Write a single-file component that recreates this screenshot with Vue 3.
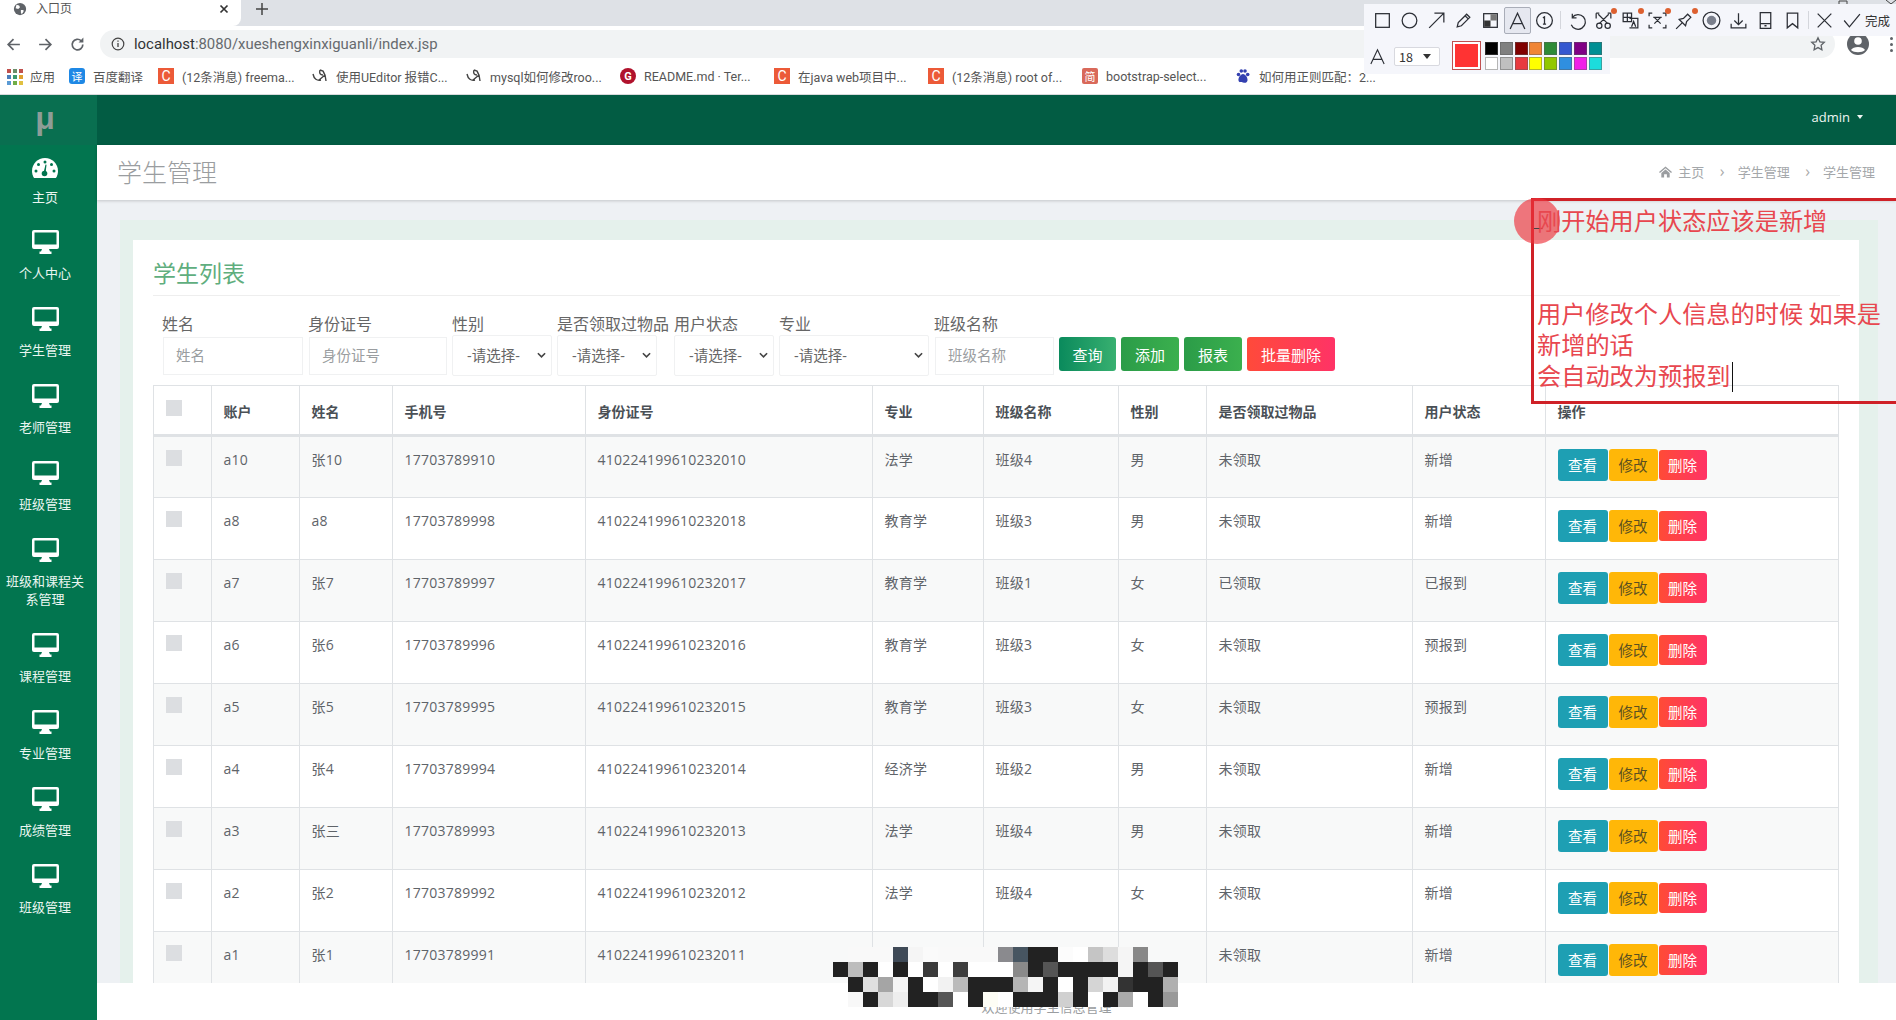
<script setup>
const bookmarks = [
  { kind: 'apps', text: '应用', w: 63 },
  { kind: 'yi', text: '百度翻译', w: 89 },
  { kind: 'c', text: '(12条消息) freema...', w: 154 },
  { kind: 'bird', text: '使用UEditor 报错C...', w: 154 },
  { kind: 'bird', text: 'mysql如何修改roo...', w: 154 },
  { kind: 'g', text: 'README.md · Ter...', w: 154 },
  { kind: 'c', text: '在java web项目中...', w: 154 },
  { kind: 'c', text: '(12条消息) root of...', w: 154 },
  { kind: 'jian', text: 'bootstrap-select...', w: 153 },
  { kind: 'paw', text: '如何用正则匹配：2...', w: 140 }
]
const appColors = ['#c0504d', '#6b8e6b', '#c0504d', '#4a7ebb', '#3d9970', '#e0a030', '#5b9bd5', '#70ad47', '#e0c040']
const menu = ['个人中心', '学生管理', '老师管理', '班级管理', '班级和课程关系管理', '课程管理', '专业管理', '成绩管理', '班级管理']
const colWidths = [58, 88, 93, 193, 287, 111, 135, 88, 206, 133, 293]
const headers = ['账户', '姓名', '手机号', '身份证号', '专业', '班级名称', '性别', '是否领取过物品', '用户状态', '操作']
const rows = [
  ['a10', '张10', '17703789910', '410224199610232010', '法学', '班级4', '男', '未领取', '新增'],
  ['a8', 'a8', '17703789998', '410224199610232018', '教育学', '班级3', '男', '未领取', '新增'],
  ['a7', '张7', '17703789997', '410224199610232017', '教育学', '班级1', '女', '已领取', '已报到'],
  ['a6', '张6', '17703789996', '410224199610232016', '教育学', '班级3', '女', '未领取', '预报到'],
  ['a5', '张5', '17703789995', '410224199610232015', '教育学', '班级3', '女', '未领取', '预报到'],
  ['a4', '张4', '17703789994', '410224199610232014', '经济学', '班级2', '男', '未领取', '新增'],
  ['a3', '张三', '17703789993', '410224199610232013', '法学', '班级4', '男', '未领取', '新增'],
  ['a2', '张2', '17703789992', '410224199610232012', '法学', '班级4', '女', '未领取', '新增'],
  ['a1', '张1', '17703789991', '410224199610232011', '法学', '班级4', '男', '未领取', '新增']
]
const swatches = ['#000000', '#808080', '#800000', '#f08535', '#2e8b37', '#3558d0', '#800085', '#008f94', '#ffffff', '#c0c0c0', '#e83a3f', '#ffff00', '#92c800', '#2f8fe0', '#f020e8', '#1cdcdc']
const _ = null
const w = '#f9f9f9'
const mosaic = [
  _, w, w, w, '#3f4a57', '#f5f5f5', '#fafafa', w, w, w, w, '#8a8a8e', '#475561', '#222', '#222', '#fcfcfc', '#fff', '#c5c5c5', '#ddd', '#f5f5f5', '#888', _, _,
  '#222', '#bdbdbd', '#222', '#fff', '#222', '#fff', '#3a3a3a', '#fff', '#3e3e3e', '#fff', '#fff', '#fff', '#8a8a8a', '#222', '#555', '#222', '#222', '#222', '#222', '#f5f5f5', '#222', '#555', '#222',
  _, '#222', '#e0e0e0', '#a5a5a5', '#f5f5f5', '#222', '#fff', '#f2f2f2', '#bbb', '#222', '#222', '#222', '#b5b5b5', '#f5f5f5', '#222', '#fff', '#222', '#d5d5d5', '#f2f2f2', '#333', '#222', '#222', '#b0b0b0',
  _, '#f8f8f8', '#222', '#d8d8d8', '#eee', '#222', '#222', '#555', '#fff', '#222', '#fdfdf5', '#fff', '#222', '#222', '#222', '#d0d0d0', '#222', '#fff', '#222', '#aaa', '#fff', '#222', '#999'
]
</script>

<template>
  <div class="root">
    <header class="chrome">
      <div class="tabs">
        <div class="tab">
          <svg class="globe" viewBox="0 0 16 16"><circle cx="8" cy="8" r="7" fill="#5f6368"/><path d="M4 3l3 1 1 2-2 2-3-1zM9 9l3 0 0 2-2 3-1-2z" fill="#fff"/></svg>
          <span class="tab-title">入口页</span>
          <svg class="tab-x" viewBox="0 0 10 10"><path d="M1.500 1.500l7 7M8.500 1.500l-7 7" stroke="#333" stroke-width="1.700"/></svg>
        </div>
        <svg class="tab-plus" viewBox="0 0 12 12"><path d="M6 0v12M0 6h12" stroke="#444" stroke-width="1.500"/></svg>
      </div>
      <div class="toolbar">
        <svg class="nav-ic" viewBox="0 0 16 16"><path d="M14 8H3M8 3L3 8l5 5" fill="none" stroke="#5f6368" stroke-width="1.6"/></svg>
        <svg class="nav-ic" viewBox="0 0 16 16"><path d="M2 8h11M8 3l5 5-5 5" fill="none" stroke="#5f6368" stroke-width="1.6"/></svg>
        <svg class="nav-ic" viewBox="0 0 16 16"><path d="M13 8a5 5 0 1 1-1.5-3.5" fill="none" stroke="#5f6368" stroke-width="1.6"/><path d="M13.5 1.5v4.5H9z" fill="#5f6368"/></svg>
        <div class="url">
          <svg class="info" viewBox="0 0 14 14"><circle cx="7" cy="7" r="5.8" fill="none" stroke="#444" stroke-width="1.2"/><path d="M7 6v4M7 3.6v1.2" stroke="#444" stroke-width="1.3"/></svg>
          <span class="host">localhost</span><span class="path">:8080/xueshengxinxiguanli/index.jsp</span>
          <svg class="star" viewBox="0 0 16 16"><path d="M8 1.8l1.9 4 4.4.5-3.2 3 .8 4.4L8 11.6l-3.9 2.1.8-4.4-3.2-3 4.4-.5z" fill="none" stroke="#5f6368" stroke-width="1.3"/></svg>
        </div>
        <svg class="avatar" viewBox="0 0 22 22"><circle cx="11" cy="11" r="11" fill="#5f6368"/><circle cx="11" cy="8" r="3.8" fill="#fff"/><path d="M4 17c2-4 12-4 14 0-3 3-11 3-14 0z" fill="#fff"/></svg>
        <span class="dots"><i></i><i></i><i></i></span>
      </div>
      <div class="bookmarks">
        <div v-for="b in bookmarks" :key="b.text" class="bm" :style="{ width: b.w + 'px' }">
          <span v-if="b.kind === 'apps'" class="bm-apps"><i v-for="(c, i) in appColors" :key="i" :style="{ background: c }"></i></span>
          <span v-else-if="b.kind === 'yi'" class="bm-ic yi">译</span>
          <span v-else-if="b.kind === 'c'" class="bm-ic cc">C</span>
          <span v-else-if="b.kind === 'g'" class="bm-ic gg">G</span>
          <span v-else-if="b.kind === 'jian'" class="bm-ic jian">简</span>
          <svg v-else-if="b.kind === 'bird'" class="bm-svg" viewBox="0 0 16 16"><path d="M1 6c1 5 4 7 8 6M8 2l3 1c2 3 3 7 3 10M8 2c-1 3 0 5 3 5M7 12l6-5" fill="none" stroke="#444" stroke-width="1.4"/></svg>
          <svg v-else class="bm-svg" viewBox="0 0 16 16"><g fill="#3340b0"><circle cx="3.5" cy="6.5" r="1.8"/><circle cx="6.3" cy="3" r="1.8"/><circle cx="10" cy="3" r="1.8"/><circle cx="12.7" cy="6.5" r="1.8"/><path d="M8 6c2.5 0 5 4 4.5 6.5S10 15 8 14.5 4 15 3.5 12.500 5.500 6 8 6z"/></g></svg>
          <span class="bm-text">{{ b.text }}</span>
        </div>
      </div>
    </header>

    <div class="shell">
      <aside class="side">
        <div class="logo">μ</div>
        <div class="side-item home">
          <svg class="gauge" viewBox="0 0 26 20"><path d="M13 0C5.800 0 0 5.800 0 13c0 2.500.7 4.800 1.900 6.800.2.200.4.200.6.200h21c.2 0 .4 0 .6-.2C25.300 17.800 26 15.500 26 13 26 5.800 20.200 0 13 0z" fill="#fff"/><g fill="#02754f"><circle cx="13" cy="4" r="1.500"/><circle cx="6.500" cy="6.500" r="1.500"/><circle cx="19.500" cy="6.500" r="1.500"/><circle cx="4" cy="13" r="1.500"/><circle cx="22" cy="13" r="1.500"/><circle cx="12.500" cy="15.500" r="2.800"/><path d="M11.500 15l2-8.500 1 .3-1 9z"/></g></svg>
          <span>主页</span>
        </div>
        <div v-for="(m, i) in menu" :key="i" class="side-item">
          <svg class="desk" viewBox="0 0 27 24"><path d="M2 0h23a2 2 0 0 1 2 2v15a2 2 0 0 1-2 2h-8l1 2.500h1.500V24H7.500v-2.500H9l1-2.500H2a2 2 0 0 1-2-2V2a2 2 0 0 1 2-2zm.5 2.500v12h22v-12z" fill="#fff" fill-rule="evenodd"/></svg>
          <span>{{ m }}</span>
        </div>
      </aside>

      <main class="main">
        <div class="topbar"><span class="admin">admin</span><i class="caret"></i></div>
        <div class="heading">
          <h1>学生管理</h1>
          <div class="crumbs">
            <svg class="home-ic" viewBox="0 0 14 12"><path d="M7 0l7 6-1 1-6-5-6 5-1-1zM2.500 7L7 3.200 11.500 7v5H8.500V8.500h-3V12H2.500z" fill="#9a9da0"/></svg>
            <span>主页</span><b>›</b><span>学生管理</span><b>›</b><span>学生管理</span>
          </div>
        </div>
        <div class="content">
          <div class="tint">
            <section class="card">
              <h2>学生列表</h2>
              <div class="filters">
                <div class="fg w141"><label>姓名</label><div class="ctl"><input class="inp" placeholder="姓名" /></div></div>
                <div class="fg w139"><label>身份证号</label><div class="ctl"><input class="inp" placeholder="身份证号" /></div></div>
                <div class="fg w100"><label>性别</label><div class="ctl"><div class="sel">-请选择-<svg viewBox="0 0 10 6"><path d="M1 1l4 4 4-4" fill="none" stroke="#444" stroke-width="1.800"/></svg></div></div></div>
                <div class="fg w112"><label>是否领取过物品</label><div class="ctl"><div class="sel w100">-请选择-<svg viewBox="0 0 10 6"><path d="M1 1l4 4 4-4" fill="none" stroke="#444" stroke-width="1.800"/></svg></div></div></div>
                <div class="fg w100"><label>用户状态</label><div class="ctl"><div class="sel">-请选择-<svg viewBox="0 0 10 6"><path d="M1 1l4 4 4-4" fill="none" stroke="#444" stroke-width="1.800"/></svg></div></div></div>
                <div class="fg w150"><label>专业</label><div class="ctl"><div class="sel">-请选择-<svg viewBox="0 0 10 6"><path d="M1 1l4 4 4-4" fill="none" stroke="#444" stroke-width="1.800"/></svg></div></div></div>
                <div class="fg w120"><label>班级名称</label><div class="ctl"><input class="inp" placeholder="班级名称" /></div></div>
                <div class="actions">
                  <button class="fb q">查询</button>
                  <button class="fb g">添加</button>
                  <button class="fb g">报表</button>
                  <button class="fb d">批量删除</button>
                </div>
              </div>
              <table>
                <colgroup><col v-for="(cw, i) in colWidths" :key="i" :style="{ width: cw + 'px' }" /></colgroup>
                <thead>
                  <tr>
                    <th class="chk"><span class="box"></span></th>
                    <th v-for="h in headers" :key="h">{{ h }}</th>
                  </tr>
                </thead>
                <tbody>
                  <tr v-for="r in rows" :key="r[0]">
                    <td class="chk"><span class="box"></span></td>
                    <td v-for="(c, i) in r" :key="i">{{ c }}</td>
                    <td class="ops">
                      <button class="rb see">查看</button><button class="rb edit">修改</button><button class="rb del">删除</button>
                    </td>
                  </tr>
                </tbody>
              </table>
            </section>
          </div>
        </div>
        <footer class="foot">欢迎使用学生信息管理</footer>
      </main>
    </div>

    <div class="mosaic"><i v-for="(c, i) in mosaic" :key="i" :style="{ background: c || 'transparent' }"></i></div>

    <div class="note-box"></div>
    <div class="note-dot"></div>
    <div class="note-text">刚开始用户状态应该是新增<br /><br /><br />用户修改个人信息的时候 如果是<br />新增的话<br />会自动改为预报到<i class="text-caret"></i></div>

    <svg class="wc" viewBox="0 0 60 4"><path d="M3 4V1h8v3M50 0l5 4 5-4" fill="none" stroke="#444" stroke-width="1"/></svg>

    <div class="shot">
      <div class="shot-top">
        <span class="ti"><svg viewBox="0 0 20 20"><rect x="3.500" y="3.500" width="13" height="13"/></svg></span>
        <span class="ti"><svg viewBox="0 0 20 20"><circle cx="10" cy="10" r="7"/></svg></span>
        <span class="ti"><svg viewBox="0 0 20 20"><path d="M3 17L17 3M8 3h9v9"/></svg></span>
        <span class="ti"><svg viewBox="0 0 20 20"><path d="M4 16l1-4 8-8 3 3-8 8zM11.500 5.500l3 3"/></svg></span>
        <span class="ti"><svg viewBox="0 0 20 20"><rect x="3.500" y="3.500" width="13" height="13"/><rect x="10" y="4" width="6" height="6" fill="#777" stroke="none"/><rect x="4" y="10" width="6" height="6" fill="#333" stroke="none"/></svg></span>
        <span class="ti on"><svg viewBox="0 0 20 20"><path d="M3 18L10 3l7 15M5.500 13h9"/></svg></span>
        <span class="ti"><svg viewBox="0 0 20 20"><circle cx="10" cy="10" r="7.500"/><path d="M8.500 7.500L10 6.500v7M8.500 13.500h3"/></svg></span>
        <span class="sp"></span>
        <span class="ti"><svg viewBox="0 0 20 20"><path d="M6 3.500v4h4M6 7a7 7 0 1 1-1 7"/></svg></span>
        <span class="ti dot"><svg viewBox="0 0 20 20"><path d="M3 3h3M14 3h3M3 3v5M17 3v5M5 4l9 9M15 4l-9 9"/><circle cx="6" cy="15" r="2.500"/><circle cx="14" cy="15" r="2.500"/></svg></span>
        <span class="ti dot"><svg viewBox="0 0 20 20"><path d="M3 3h8v8H3zM7 3v8M3 7h8M9 8h8v9H9M11 16l2-5 2 5"/></svg></span>
        <span class="ti dot"><svg viewBox="0 0 20 20"><path d="M2 6V3h3M18 6V3h-3M2 14v3h3M18 14v3h-3M6 7h8M7 7l6 6M13 7l-6 6"/></svg></span>
        <span class="ti dot"><svg viewBox="0 0 20 20"><path d="M2 18l6-6M5 9l6 6 1-4 4-4-3-3-4 4z"/></svg></span>
        <span class="ti"><svg viewBox="0 0 20 20"><circle cx="10" cy="10" r="8"/><circle cx="10" cy="10" r="4.500" fill="#7a7f8c" stroke="none"/></svg></span>
        <span class="ti"><svg viewBox="0 0 20 20"><path d="M10 3v11M6 10l4 4 4-4M3 13v4h14v-4"/></svg></span>
        <span class="ti"><svg viewBox="0 0 20 20"><rect x="5" y="2.500" width="10" height="15"/><path d="M5 13h10M9 15h2"/></svg></span>
        <span class="ti"><svg viewBox="0 0 20 20"><path d="M5 3h10v14l-5-4-5 4z"/></svg></span>
        <span class="sp"></span>
        <span class="ti"><svg viewBox="0 0 20 20"><path d="M3.500 3.500l13 13M16.500 3.500l-13 13"/></svg></span>
        <span class="ti"><svg viewBox="0 0 20 20"><path d="M3 10l5 6L18 4"/></svg></span>
        <span class="done">完成</span>
      </div>
      <div class="shot-bottom">
        <svg class="big-a" viewBox="0 0 20 20"><path d="M3 18L10 3l7 15M5.500 13h9"/></svg>
        <div class="size">18<i></i></div>
        <div class="cur"></div>
        <div class="grid"><i v-for="s in swatches" :key="s" :style="{ background: s }"></i></div>
      </div>
    </div>
  </div>
</template>

<style>
html, body { margin: 0; background: #fff; }
</style>

<style scoped>
.root { position: relative; width: 1896px; height: 1020px; overflow: hidden; font-family: "Open Sans", "Noto Sans CJK SC", sans-serif; color: #5c6166; background: #fff; }

.chrome { height: 95px; font-family: Roboto, "Noto Sans CJK SC", sans-serif; }
.tabs { height: 26px; background: #dee1e6; display: flex; align-items: flex-start; }
.tab { width: 241px; height: 26px; background: #fff; border-radius: 0 0 8px 0; display: flex; align-items: center; box-sizing: border-box; padding: 0 0 8px 13px; }
.globe { width: 14px; height: 14px; margin-right: 9px; }
.tab-title { font-size: 12px; color: #555; flex: 1; line-height: 16px; }
.tab-x { width: 10px; height: 10px; margin-right: 12px; }
.tab-plus { width: 12px; height: 12px; margin: 3px 0 0 15px; }
.toolbar { height: 32px; box-sizing: border-box; padding: 4px 0 0 5px; display: flex; align-items: center; }
.nav-ic { width: 17px; height: 17px; margin-right: 15px; }
.url { margin-left: -1px; margin-right: 0; width: 1735px; height: 28px; border-radius: 14px; background: #f1f3f4; display: flex; align-items: center; box-sizing: border-box; padding-left: 11px; font-size: 14.900px; }
.info { width: 14px; height: 14px; margin-right: 9px; }
.host { color: #303336; }
.path { color: #666a6e; }
.star { width: 16px; height: 16px; margin-left: auto; margin-right: 9px; }
.avatar { width: 22px; height: 22px; margin-left: 12px; }
.dots { margin-left: 21px; display: flex; flex-direction: column; gap: 3px; }
.dots i { width: 3px; height: 3px; background: #5f6368; border-radius: 50%; display: block; }
.bookmarks { height: 37px; padding-left: 6px; display: flex; align-items: center; border-bottom: 1px solid #d8dadc; box-sizing: border-box; }
.bm { display: flex; align-items: center; flex: none; font-size: 12.500px; color: #555; white-space: nowrap; }
.bm-text { margin-left: 8px; }
.bm-apps { width: 16px; height: 16px; display: grid; grid-template-columns: repeat(3, 3.500px); gap: 2.500px; padding: 1px 0 0 1px; box-sizing: border-box; grid-auto-rows: 3.500px; }
.bm-apps i { display: block; }
.bm-ic { width: 16px; height: 16px; display: flex; align-items: center; justify-content: center; font-size: 12px; color: #fff; flex: none; }
.yi { background: #1e88e5; border-radius: 3px; font-size: 11px; }
.cc { background: #ec5a38; font-size: 14px; }
.gg { background: #b0122c; border-radius: 50%; font-weight: 700; font-size: 11px; }
.jian { background: #d9695a; border-radius: 2px; font-size: 11px; }
.bm-svg { width: 16px; height: 16px; flex: none; }

.shell { display: flex; height: 925px; }
.side { width: 97px; flex: none; background: #02754f; color: #eaf6f1; }
.logo { height: 50px; box-sizing: border-box; padding: 0 7px 4px 0; background: #096f50; color: #8e9d97; font-size: 32px; font-weight: 800; text-align: center; line-height: 46px; font-family: "Liberation Sans", sans-serif; }
.side-item { box-sizing: border-box; padding: 11px 13px 14px 6px; display: flex; flex-direction: column; align-items: center; text-align: center; font-size: 13px; line-height: 18px; }
.side-item.home { padding: 13px 13px 13px 6px; }
.desk { width: 27px; height: 24px; margin-bottom: 10px; }
.gauge { width: 26px; height: 20px; margin-bottom: 10px; }

.main { flex: 1; min-width: 0; display: flex; flex-direction: column; }
.topbar { height: 50px; flex: none; background: #025c43; display: flex; align-items: center; justify-content: flex-end; padding-right: 33px; color: #eef6f2; font-size: 13px; padding-bottom: 7px; box-sizing: border-box; }
.caret { width: 0; height: 0; border: 3.500px solid transparent; border-top: 4px solid #eef6f2; border-bottom: 0; margin-left: 7px; }
.heading { height: 55px; flex: none; background: #fff; display: flex; align-items: center; justify-content: space-between; box-shadow: 0 1px 3px rgba(0, 0, 0, .18); position: relative; padding: 0 21px 3px 20px; box-sizing: border-box; }
h1 { margin: 0; font-size: 25px; font-weight: 300; color: #9a9da0; }
.crumbs { display: flex; align-items: center; font-size: 13px; color: #a4a7aa; margin-bottom: -1px; }
.home-ic { width: 13px; height: 12px; margin-right: 6px; }
.crumbs b { font-weight: 400; font-size: 16px; margin: 0 13px 2px 15.500px; color: #aaa; }
.content { flex: 1; min-height: 0; overflow: hidden; background: #eef1f4; padding: 20px 18px 0 23px; box-sizing: border-box; }
.tint { background: #e5f1ec; padding: 20px 19px 0 13px; height: 100%; box-sizing: border-box; }
.card { background: #fff; padding: 16px 19px 0 20px; height: 900px; box-sizing: border-box; }
h2 { margin: 0; height: 39px; line-height: 34px; font-size: 23px; font-weight: 400; color: #5fae7e; border-bottom: 1px solid #eee; }
.filters { margin-top: 16px; padding-left: 9px; display: flex; gap: 5px; height: 64px; margin-bottom: 9px; font-size: 14.500px; }
.fg { display: flex; flex-direction: column; flex: none; }
.fg label { height: 23px; line-height: 24px; font-size: 16px; color: #666; white-space: nowrap; }
.w141 { width: 141px; }
.w139 { width: 139px; }
.w100 { width: 100px; }
.w112 { width: 112px; }
.w150 { width: 150px; }
.w120 { width: 120px; }
.ctl { height: 41px; display: flex; align-items: center; }
.inp { width: 100%; height: 38px; box-sizing: border-box; border: 1px solid #f0f1f2; padding: 0 12px; font: inherit; color: #666; outline: none; background: #fff; margin-left: 1px; }
.inp::placeholder { color: #9a9da0; opacity: 1; }
.sel { flex: none; width: 100%; height: 41px; box-sizing: border-box; border: 1px solid #f0f1f2; border-radius: 2px; padding: 0 0 2px 14px; display: flex; align-items: center; justify-content: space-between; color: #666; }
.sel.w100 { width: 100px; }
.sel svg { width: 9px; height: 6px; margin-right: 5px; }
.actions { display: flex; gap: 5px; margin-top: 25px; height: 34px; margin-left: 0; }
.fb { height: 34px; border: 0; border-radius: 3px; color: #fff; font: inherit; font-size: 15px; padding: 0; cursor: pointer; }
.fb.q { width: 57px; background: linear-gradient(90deg, #0a8a5c, #38b070); }
.fb.g { width: 58px; background: linear-gradient(90deg, #2b9c48, #3bb04e); }
.fb.d { width: 88px; background: linear-gradient(90deg, #ff4a3a, #ff3366); }

table { width: 1685px; table-layout: fixed; border-collapse: collapse; font-size: 14px; color: #5f6469; letter-spacing: .25px; }
th, td { border: 1px solid #dfe2e5; padding: 12px 11.500px; text-align: left; vertical-align: top; line-height: 21px; }
th { height: 50px; box-sizing: border-box; font-weight: 700; color: #4a5056; vertical-align: bottom; padding-bottom: 12px; border-bottom: 3px solid #dfe2e5; letter-spacing: 0; }
td { height: 62px; box-sizing: border-box; }
tbody tr:nth-child(odd) { background: #f8f9f9; }
.chk { padding-left: 12px; }
th.chk { vertical-align: top; padding-top: 14px; }
td.chk { padding-top: 13px; }
.box { display: block; width: 16px; height: 16px; background: #dcdee1; }
.ops { white-space: nowrap; }
.rb { height: 32px; border: 0; border-radius: 3px; font: inherit; font-size: 14.500px; color: #fff; padding: 0; vertical-align: top; letter-spacing: 0; cursor: pointer; }
.see { width: 50px; background: #1e9fb3; }
.edit { width: 49px; background: #ffb708; color: #5c5020; margin-left: 1px; }
.del { width: 48px; height: 30px; margin: 1px 0 0 1px; background: linear-gradient(90deg, #ff4b36, #ff3366); }

.foot { height: 37px; flex: none; background: #fff; display: flex; align-items: flex-end; justify-content: center; padding: 0 0 4px 100px; box-sizing: border-box; font-size: 13px; line-height: 18px; color: #9a9da0; }

.mosaic { position: absolute; left: 833px; top: 947px; display: grid; grid-template-columns: repeat(23, 15px); grid-auto-rows: 15px; }
.mosaic i { display: block; }

.note-box { position: absolute; left: 1531px; top: 198px; width: 380px; height: 206px; box-sizing: border-box; border: 3px solid #cf2127; }
.note-dot { position: absolute; left: 1514px; top: 198px; width: 46px; height: 46px; border-radius: 50%; background: rgba(238, 50, 60, .65); }
.note-dot::after { content: ""; position: absolute; left: 20px; top: 30px; width: 9px; height: 1px; background: #444; }
.note-text { position: absolute; left: 1537px; top: 204px; font-size: 24.200px; line-height: 31px; color: #e8474f; white-space: nowrap; font-family: "Noto Sans CJK SC", sans-serif; font-weight: 400; }
.text-caret { display: inline-block; width: 1px; height: 30px; background: #111; vertical-align: -7px; margin-left: 1px; }
.wc { position: absolute; left: 1836px; top: 0; width: 60px; height: 4px; }

.shot { position: absolute; left: 1364px; top: 4px; right: 0; font-family: "Noto Sans CJK SC", sans-serif; }
.shot-top { height: 32px; background: #f5f6fb; display: flex; align-items: center; padding-left: 5px; }
.ti { position: relative; width: 27px; height: 27px; flex: none; display: flex; align-items: center; justify-content: center; box-sizing: border-box; }
.ti svg { width: 21px; height: 21px; fill: none; stroke: #2c2f36; stroke-width: 1.200; }
.ti.on { background: #e6e8f0; border: 1px solid #a9adb8; border-radius: 2px; }
.ti.dot::after { content: ""; position: absolute; right: 0; top: 1px; width: 6px; height: 6px; border-radius: 50%; background: #dd6030; }
.sp { width: 1px; height: 18px; background: #d4d6dc; margin: 0 2px; flex: none; }
.done { font-size: 12.500px; color: #333; margin-left: 0; white-space: nowrap; }
.shot-bottom { width: 246px; height: 38px; background: #f5f6fb; display: flex; align-items: center; position: relative; }
.big-a { width: 19px; height: 19px; margin-left: 4px; fill: none; stroke: #2c2f36; stroke-width: 1.200; flex: none; margin-bottom: -3px; }
.size { margin-left: 7px; width: 46px; height: 19px; box-sizing: border-box; border: 1px solid #d8d9df; border-radius: 2px; background: #fff; font-size: 12.500px; line-height: 17px; padding-left: 4px; color: #333; position: relative; margin-top: 3px; }
.size i { position: absolute; right: 8px; top: 6px; border: 4.500px solid transparent; border-top: 5px solid #333; border-bottom: 0; }
.cur { margin-left: 13px; width: 27px; height: 27px; box-sizing: border-box; background: #ff3333; border: 2px solid #fff; outline: 1px solid #c05050; flex: none; margin-top: 1px; }
.grid { margin-left: 5px; display: grid; grid-template-columns: repeat(8, 13px); grid-auto-rows: 13px; gap: 2px 1.800px; margin-top: 1px; }
.grid i { display: block; box-sizing: border-box; border: 1px solid rgba(90, 90, 90, .45); }
</style>
